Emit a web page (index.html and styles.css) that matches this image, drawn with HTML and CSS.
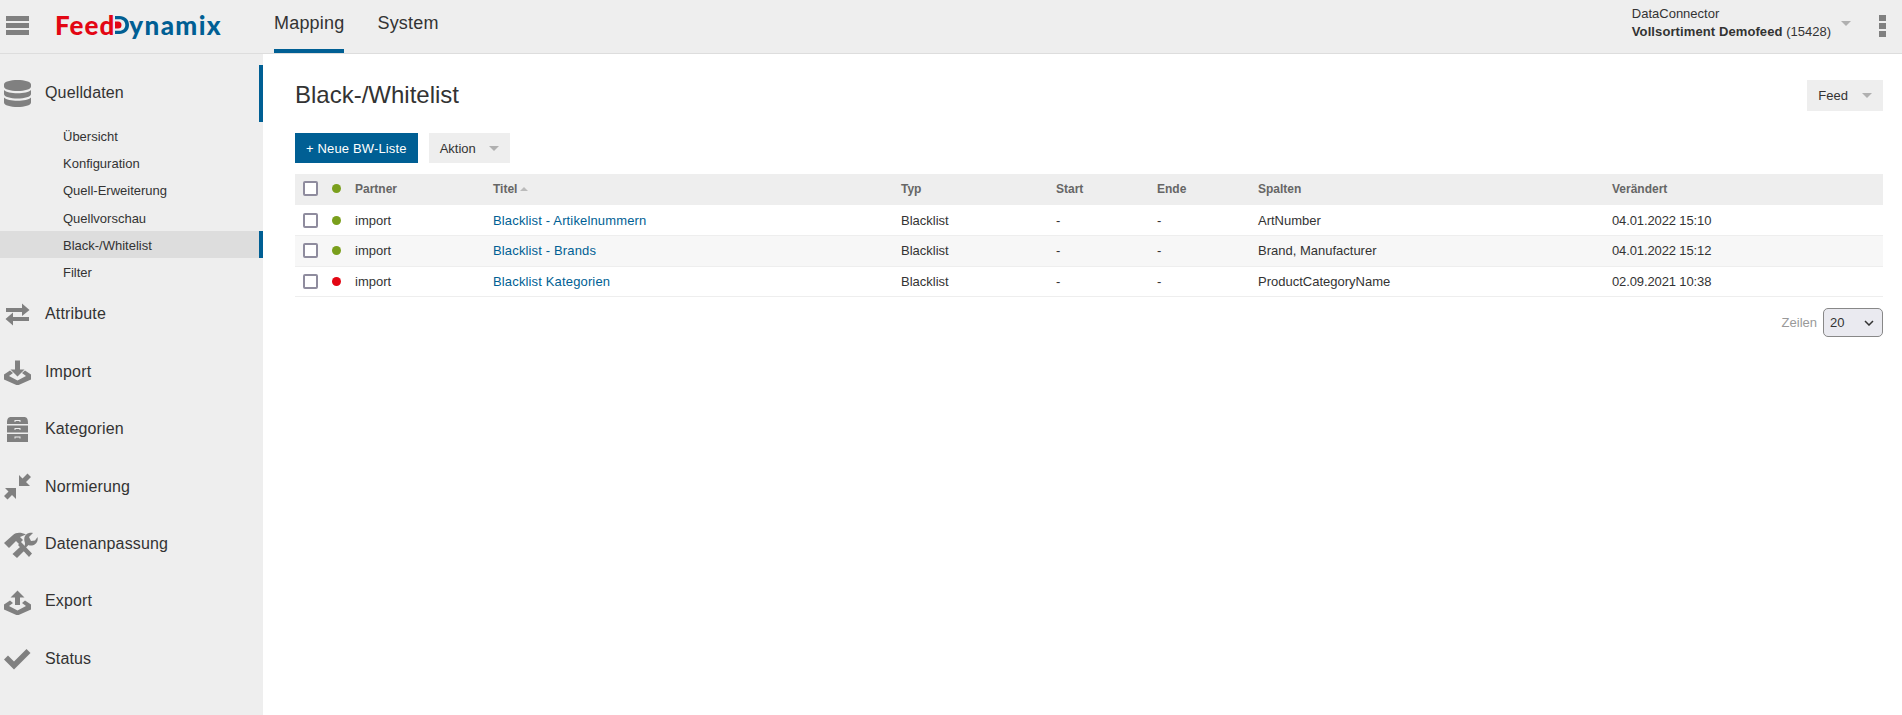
FILE: index.html
```html
<!DOCTYPE html>
<html lang="de">
<head>
    <meta charset="UTF-8">
    <title>Black-/Whitelist</title>
    <link rel="stylesheet" href="styles.css">
</head>
<body>
    <div class="header">
        <svg class="burger" viewBox="0 0 23 19"><path d="M0 0h23v5H0zM0 7h23v5H0zM0 14h23v5H0z"/></svg>
        <div class="logo">
            <span class="logo-red">Feed</span><svg class="logo-d" viewBox="0 0 15 18"><path class="logo-d-blue" d="M1 0h4.500C11 0 15 3.500 15 9s-4 9-9.500 9H1v-3.200h4.500c3.500 0 5.800-2.400 5.800-5.800S9 3.200 5.500 3.200H1z"/><path class="logo-d-red" d="M1 5.500h3a3.500 3.500 0 0 1 0 7H1z"/></svg><span class="logo-blue">ynamix</span>
        </div>
        <div class="tabs">
            <a class="tab active">Mapping</a>
            <a class="tab">System</a>
        </div>
        <div class="feed-info">
            <div>DataConnector</div>
            <div><strong>Vollsortiment Demofeed</strong> (15428)</div>
        </div>
        <span class="caret caret-feed"></span>
        <svg class="kebab" viewBox="0 0 7 22"><path d="M0 0h7v6H0zM0 8h7v6H0zM0 16h7v6H0z"/></svg>
    </div>

    <div class="page">
        <div class="sidebar">
            <a class="nav-item open">
                <svg class="nav-icon" viewBox="0 0 27 27"><path d="M13.500 0C20.500 0 27 1.700 27 4.500v2C27 9.300 20.500 11 13.500 11S0 9.300 0 6.500v-2C0 1.700 6.500 0 13.500 0zM0 10c2 2.300 7.500 3.300 13.500 3.300S25 12.300 27 10v4c0 2.800-6.500 4.500-13.500 4.500S0 16.800 0 14zM0 17.500c2 2.300 7.500 3.300 13.500 3.300s11.500-1 13.500-3.300v5c0 2.800-6.500 4.500-13.500 4.500S0 25.300 0 22.500z"/></svg>
                <span class="nav-label">Quelldaten</span>
            </a>
            <div class="sub-menu">
                <a>Übersicht</a>
                <a>Konfiguration</a>
                <a>Quell-Erweiterung</a>
                <a>Quellvorschau</a>
                <a class="active">Black-/Whitelist</a>
                <a>Filter</a>
            </div>
            <a class="nav-item">
                <svg class="nav-icon" viewBox="0 0 27 27"><path d="M2 5h16V.5L25.500 7 18 13V9H2zM25 14H9V9.500L1.500 16 9 22.500V18h16z" transform="translate(0 2)"/></svg>
                <span>Attribute</span>
            </a>
            <a class="nav-item">
                <svg class="nav-icon" viewBox="0 0 27 27"><path d="M11 2.500h5v9h4.500l-7 7-7-7H11zM0 16.500l6-4 3 2.500-4 3 8.500 4.500L22 18l-4-3 3-2.500 6 4v5l-13.500 6L0 21.500z"/></svg>
                <span>Import</span>
            </a>
            <a class="nav-item">
                <svg class="nav-icon" viewBox="0 0 27 27"><path d="M3 7c0-4 1-6 4-6h13c3 0 4 2 4 6v1H3zM3 9.500h21v7H3zM3 18h21v8H3z"/><path class="cut" d="M10.500 4h6v2h-1V5h-4v1h-1zM10.500 12h6v2h-1v-1h-4v1h-1zM10.500 20.500h6v2h-1v-1h-4v1h-1z"/></svg>
                <span>Kategorien</span>
            </a>
            <a class="nav-item">
                <svg class="nav-icon" viewBox="0 0 27 27"><path d="M15 2v11h11l-4-4 5-5-3.500-3.500-5 5zM1 15h11v11l-4-4-4.500 4.500L0 23l4.500-4.500z"/></svg>
                <span>Normierung</span>
            </a>
            <a class="nav-item">
                <svg class="nav-icon wide" viewBox="0 0 34 27"><path d="M0 12l9-8c3-3 8-3 13-.5L16 6l3 3-4 4-3-3-7 7zM14 14l3-3 11 11.500-3 3.500zM21 12c-2-5 0-9 4-10 1-.3 3-.3 4 0l-4 4 2 4 4-.5 2.500-3.500c1 4-1.500 8-5.500 8.500-1.500.2-2.500 0-3.500-.5l-4 4zM17 15l4 4-8 8-4.500-4z"/></svg>
                <span>Datenanpassung</span>
            </a>
            <a class="nav-item">
                <svg class="nav-icon" viewBox="0 0 27 27"><path d="M13.500 2.500l7 7H16V17h-5V9.500H6.500zM0 16.500l6-4 3 2.500-4 3 8.500 4.500L22 18l-4-3 3-2.500 6 4v5l-13.500 6L0 21.500z"/></svg>
                <span>Export</span>
            </a>
            <a class="nav-item">
                <svg class="nav-icon" viewBox="0 0 27 27"><path d="M0 14.500l4-4 6 6L22.500 4l4 4L10 24.500z"/></svg>
                <span>Status</span>
            </a>
        </div>

        <div class="main">
            <div class="title-row">
                <h1>Black-/Whitelist</h1>
                <button class="btn">Feed<span class="caret"></span></button>
            </div>
            <div class="toolbar">
                <button class="btn btn-primary">+ Neue BW-Liste</button>
                <button class="btn">Aktion<span class="caret"></span></button>
            </div>

            <table class="bw-table">
                <colgroup>
                    <col class="col-check">
                    <col class="col-dot">
                    <col class="col-partner">
                    <col class="col-title">
                    <col class="col-type">
                    <col class="col-date">
                    <col class="col-date">
                    <col class="col-columns">
                    <col>
                </colgroup>
                <thead>
                    <tr>
                        <th><span class="check"></span></th>
                        <th><span class="dot green"></span></th>
                        <th>Partner</th>
                        <th>Titel<span class="sort-up"></span></th>
                        <th>Typ</th>
                        <th>Start</th>
                        <th>Ende</th>
                        <th>Spalten</th>
                        <th>Verändert</th>
                    </tr>
                </thead>
                <tbody>
                    <tr>
                        <td><span class="check"></span></td>
                        <td><span class="dot green"></span></td>
                        <td>import</td>
                        <td><a>Blacklist - Artikelnummern</a></td>
                        <td>Blacklist</td>
                        <td>-</td>
                        <td>-</td>
                        <td>ArtNumber</td>
                        <td class="date">04.01.2022 15:10</td>
                    </tr>
                    <tr>
                        <td><span class="check"></span></td>
                        <td><span class="dot green"></span></td>
                        <td>import</td>
                        <td><a>Blacklist - Brands</a></td>
                        <td>Blacklist</td>
                        <td>-</td>
                        <td>-</td>
                        <td>Brand, Manufacturer</td>
                        <td class="date">04.01.2022 15:12</td>
                    </tr>
                    <tr>
                        <td><span class="check"></span></td>
                        <td><span class="dot red"></span></td>
                        <td>import</td>
                        <td><a>Blacklist Kategorien</a></td>
                        <td>Blacklist</td>
                        <td>-</td>
                        <td>-</td>
                        <td>ProductCategoryName</td>
                        <td class="date">02.09.2021 10:38</td>
                    </tr>
                </tbody>
            </table>

            <div class="pager">
                <span>Zeilen</span>
                <select>
                    <option>20</option>
                    <option>50</option>
                    <option>100</option>
                </select>
            </div>
        </div>
    </div>
</body>
</html>
```

FILE: styles.css
```css
body {
    font-family: "Liberation Sans", Arial, sans-serif;
    font-size: 13px;
    color: #333;
    margin: 0;
    padding: 0;
    background-color: #fff;
    height: 715px;
    overflow: hidden;
}

/* Header */
.header {
    height: 53px;
    background-color: #eee;
    border-bottom: 1px solid #ddd;
    display: flex;
    align-items: center;
}
.burger {
    width: 23px;
    height: 19px;
    margin-left: 6px;
    margin-bottom: 2px;
    fill: #808080;
    flex-shrink: 0;
}
.logo {
    margin-left: 26px;
    width: 219px;
    display: flex;
    align-items: center;
    font-family: Lato, sans-serif;
    font-weight: 900;
    font-size: 26px;
    letter-spacing: 1px;
    margin-top: -4px;
    flex-shrink: 0;
}
.logo-red {
    color: #e30613;
}
.logo-blue {
    color: #005f94;
    margin-top: 1px;
    letter-spacing: 1.4px;
}
.logo-d {
    width: 15px;
    height: 18px;
    margin-left: -1px;
}
.logo-d-blue {
    fill: #005f94;
}
.logo-d-red {
    fill: #e30613;
}
.tabs {
    display: flex;
    gap: 33px;
    height: 53px;
}
.tab {
    display: flex;
    align-items: center;
    font-size: 18px;
    letter-spacing: 0.2px;
    color: #333;
    border-bottom: 4px solid transparent;
    box-sizing: border-box;
    padding-bottom: 2px;
}
.tab.active {
    border-bottom-color: #005f94;
}
.feed-info {
    margin-left: auto;
    line-height: 18.5px;
    margin-bottom: 7px;
}
.feed-info strong {
    letter-spacing: 0.1px;
}
.caret {
    display: inline-block;
    width: 0;
    height: 0;
    border-left: 5px solid transparent;
    border-right: 5px solid transparent;
    border-top: 5px solid #b0b0b0;
    margin-left: 13px;
}
.title-row .caret {
    margin-left: 14px;
}
.caret-feed {
    margin-left: 10px;
    margin-bottom: 6px;
}
.kebab {
    width: 7px;
    height: 22px;
    margin-left: 28px;
    margin-right: 16px;
    margin-bottom: 2px;
    fill: #808080;
}

/* Page */
.page {
    display: flex;
    height: 661px;
}
.sidebar {
    width: 263px;
    flex-shrink: 0;
    background-color: #eee;
    padding-top: 11px;
    box-sizing: border-box;
}
.nav-item {
    display: flex;
    align-items: center;
    height: 57.4px;
    font-size: 16px;
    letter-spacing: 0.15px;
    color: #333;
    box-sizing: border-box;
}
.nav-item.open {
    height: 57px;
    border-right: 4px solid #005f94;
}
.nav-label {
    margin-bottom: 2px;
}
.nav-icon {
    width: 27px;
    height: 27px;
    margin-left: 4px;
    margin-right: 14px;
    fill: #808080;
    flex-shrink: 0;
}
.nav-icon.wide {
    width: 34px;
    margin-right: 7px;
}
.nav-icon .cut {
    fill: #eee;
}
.sub-menu a {
    display: flex;
    align-items: center;
    height: 27.3px;
    padding: 1px 0 0 63px;
    box-sizing: border-box;
    color: #333;
}
.sub-menu a.active {
    background-color: #ddd;
    border-right: 4px solid #005f94;
}

/* Main */
.main {
    flex: 1;
    padding: 26px 19px 0 32px;
}
.title-row {
    display: flex;
    justify-content: space-between;
    align-items: center;
    height: 31px;
}
h1 {
    font-size: 24px;
    font-weight: normal;
    margin: 0 0 2px;
    color: #333;
}
.toolbar {
    display: flex;
    gap: 11px;
    margin-top: 22px;
}
.btn {
    font-family: inherit;
    font-size: 13px;
    color: #333;
    border: none;
    background-color: #eee;
    height: 31px;
    padding: 0 11px;
    display: flex;
    align-items: center;
}
.toolbar .btn {
    height: 30px;
}
.btn-primary {
    background-color: #005f94;
    color: #fff;
    letter-spacing: 0.15px;
}

/* Table */
.bw-table {
    width: 100%;
    margin-top: 11px;
    border-collapse: collapse;
    table-layout: fixed;
}
.col-check {
    width: 31px;
}
.col-dot {
    width: 29px;
}
.col-partner {
    width: 138px;
}
.col-title {
    width: 408px;
}
.col-type {
    width: 155px;
}
.col-date {
    width: 101px;
}
.col-columns {
    width: 354px;
}
.bw-table th {
    background-color: #eee;
    color: #666;
    font-size: 12px;
    text-align: left;
    height: 31px;
    box-sizing: border-box;
    padding: 0 0 2px;
}
.bw-table td {
    height: 30.6px;
    box-sizing: border-box;
    padding: 0;
    border-bottom: 1px solid #eee;
}
.bw-table tbody tr:nth-child(2) {
    background-color: #f7f7f7;
}
.bw-table th:first-child,
.bw-table td:first-child {
    padding-left: 8px;
}
.bw-table a {
    color: #005f94;
    letter-spacing: 0.15px;
}
.bw-table .date {
    letter-spacing: -0.12px;
}
.check {
    display: block;
    width: 11px;
    height: 11px;
    border: 2px solid #8f8c9e;
    border-radius: 2px;
    background-color: #fff;
}
.dot {
    display: block;
    width: 9px;
    height: 9px;
    border-radius: 50%;
    margin-left: 6px;
}
.dot.green {
    background-color: #7a9f1c;
}
.dot.red {
    background-color: #e30613;
}
.sort-up {
    display: inline-block;
    width: 0;
    height: 0;
    border-left: 4px solid transparent;
    border-right: 4px solid transparent;
    border-bottom: 4px solid #bbb;
    margin-left: 3px;
    vertical-align: 2px;
}
.pager {
    display: flex;
    justify-content: flex-end;
    align-items: center;
    gap: 6px;
    margin-top: 11px;
    color: #999;
}
.pager select {
    appearance: none;
    width: 60px;
    height: 29px;
    font-family: inherit;
    font-size: 13px;
    color: #333;
    background-color: #eaeaf0;
    background-image: url("data:image/svg+xml,%3Csvg xmlns='http://www.w3.org/2000/svg' width='10' height='6'%3E%3Cpath d='M1 1l4 4 4-4' fill='none' stroke='%23333' stroke-width='1.500'/%3E%3C/svg%3E");
    background-repeat: no-repeat;
    background-position: right 8px center;
    border: 1px solid #888;
    border-radius: 5px;
    padding-left: 6px;
}
```
